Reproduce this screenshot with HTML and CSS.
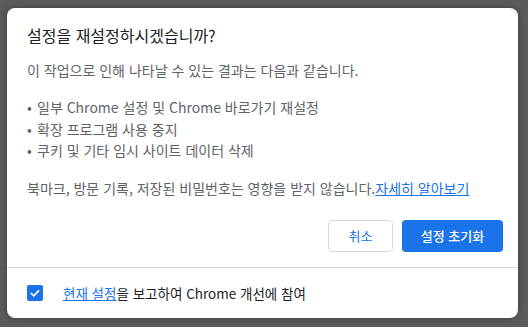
FILE: index.html
```html
<!DOCTYPE html>
<html lang="ko">

<head>
    <meta charset="UTF-8">
    <meta name="viewport" content="width=device-width, initial-scale=1.0">
    <title>설정 재설정</title>
    <link rel="stylesheet" href="styles.css">
</head>

<body>
    <div class="dialog">
        <div class="dialogBody">
            <h1 class="title">설정을 재설정하시겠습니까?</h1>
            <p class="intro">이 작업으로 인해 나타날 수 있는 결과는 다음과 같습니다.</p>
            <ul class="effects">
                <li>일부 Chrome 설정 및 Chrome 바로가기 재설정</li>
                <li>확장 프로그램 사용 중지</li>
                <li>쿠키 및 기타 임시 사이트 데이터 삭제</li>
            </ul>
            <p class="note">북마크, 방문 기록, 저장된 비밀번호는 영향을 받지 않습니다.<a href="#" class="link">자세히 알아보기</a></p>
            <div class="actions">
                <button class="btn cancel">취소</button>
                <button class="btn primary">설정 초기화</button>
            </div>
        </div>
        <div class="footer">
            <span class="checkbox">
                <svg width="16" height="16" viewBox="0 0 16 16">
                    <path d="M4 8.2 L6.8 10.8 L12 5.4" fill="none" stroke="#fff" stroke-width="1.8"/>
                </svg>
            </span>
            <span class="footText"><a href="#" class="link">현재 설정</a>을 보고하여 Chrome 개선에 참여</span>
        </div>
    </div>
</body>

</html>
```

FILE: styles.css
```css
* {
    margin: 0;
    padding: 0;
    box-sizing: border-box;
}

body {
    background-color: #5b5b5b;
    padding: 8px 10px 9px 7px;
    font-family: "Noto Sans CJK KR", "Noto Sans", sans-serif;
}

.dialog {
    width: 511px;
    height: 310px;
    background-color: #fff;
    border-radius: 8px;
    display: flex;
    flex-direction: column;
    box-shadow: 0 0 6px rgba(0, 0, 0, 0.35);
}

.dialogBody {
    padding: 16px 15px 0 20px;
    height: 260px;
    border-bottom: 1px solid #dadce0;
}

.title {
    font-size: 16px;
    font-weight: 400;
    color: #202124;
    line-height: 22px;
}

.intro {
    margin-top: 14px;
    font-size: 14px;
    color: #5f6368;
    line-height: 20px;
}

.effects {
    list-style: none;
    margin-top: 17px;
    font-size: 14px;
    color: #5f6368;
    line-height: 21.5px;
}

.effects li::before {
    content: "•";
    display: inline-block;
    width: 10px;
}

.note {
    margin-top: 16px;
    font-size: 14px;
    color: #5f6368;
    line-height: 20px;
}

.link {
    color: #1a73e8;
}

.actions {
    display: flex;
    justify-content: flex-end;
    gap: 9px;
    margin-top: 22px;
}

.btn {
    height: 32px;
    border-radius: 4px;
    font-family: inherit;
    font-size: 13px;
}

.cancel {
    width: 65px;
    background-color: #fff;
    border: 1px solid #dadce0;
    color: #1a73e8;
}

.primary {
    width: 101px;
    background-color: #1a73e8;
    border: 0;
    color: #fff;
    font-weight: 500;
}

.footer {
    flex: 1;
    display: flex;
    align-items: center;
    padding-left: 20px;
}

.checkbox {
    width: 16px;
    height: 16px;
    border-radius: 2px;
    background-color: #1a73e8;
    display: flex;
}

.footText {
    margin-left: 20px;
    font-size: 13.5px;
    color: #202124;
}
```
